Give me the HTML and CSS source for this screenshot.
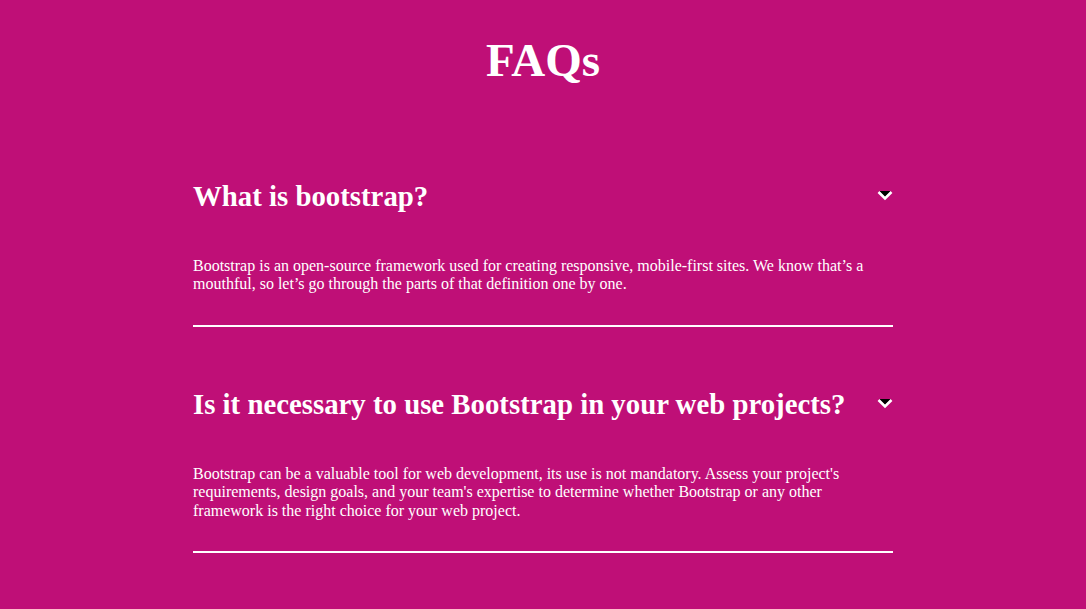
FILE: index.html
```html
<!DOCTYPE html>
<html lang="en">
<head>
<meta charset="utf-8">
<title>FAQs</title>
<link rel="stylesheet" href="styles.css">
</head>
<body>
<main class="faq">
  <h1 class="faq-title">FAQs</h1>
  <section class="faq-item">
    <div class="faq-head">
      <h2 class="faq-q">What is bootstrap?</h2>
      <svg class="chev" width="16" height="12" viewBox="0 0 16 12"><polygon points="2,1 14,1 8,7" fill="#000"/><polyline points="1.5,2 8,8.5 14.5,2" fill="none" stroke="#fff" stroke-width="2.6"/></svg>
    </div>
    <p class="faq-a">Bootstrap is an open-source framework used for creating responsive, mobile-first sites. We know that’s a mouthful, so let’s go through the parts of that definition one by one.</p>
    <div class="faq-rule"></div>
  </section>
  <section class="faq-item">
    <div class="faq-head">
      <h2 class="faq-q">Is it necessary to use Bootstrap in your web projects?</h2>
      <svg class="chev" width="16" height="12" viewBox="0 0 16 12"><polygon points="2,1 14,1 8,7" fill="#000"/><polyline points="1.5,2 8,8.5 14.5,2" fill="none" stroke="#fff" stroke-width="2.6"/></svg>
    </div>
    <p class="faq-a">Bootstrap can be a valuable tool for web development, its use is not mandatory. Assess your project's requirements, design goals, and your team's expertise to determine whether Bootstrap or any other framework is the right choice for your web project.</p>
    <div class="faq-rule"></div>
  </section>
</main>
</body>
</html>
```
FILE: styles.css
```css
html, body {
  margin: 0;
  padding: 0;
  background: #bf0f77;
}
body {
  font-family: "Liberation Serif", "Times New Roman", serif;
  color: #fff;
  min-height: 609px;
}
.faq {
  width: 700px;
  margin: 0 auto;
  padding-top: 33px;
}
.faq-title {
  margin: 0 0 93px;
  font-size: 47px;
  line-height: 54px;
  font-weight: bold;
  text-align: center;
}
.faq-item + .faq-item {
  margin-top: 61px;
}
.faq-head {
  display: flex;
  align-items: center;
  justify-content: space-between;
  height: 33px;
}
.faq-q {
  margin: 0;
  font-size: 28.8px;
  line-height: 33px;
  font-weight: bold;
}
.chev {
  display: block;
  margin-top: -1px;
}
.faq-a {
  margin: 44px 0 31px;
  font-size: 16px;
  line-height: 18.4px;
}
.faq-rule {
  height: 2px;
  background: #fff;
}
```
